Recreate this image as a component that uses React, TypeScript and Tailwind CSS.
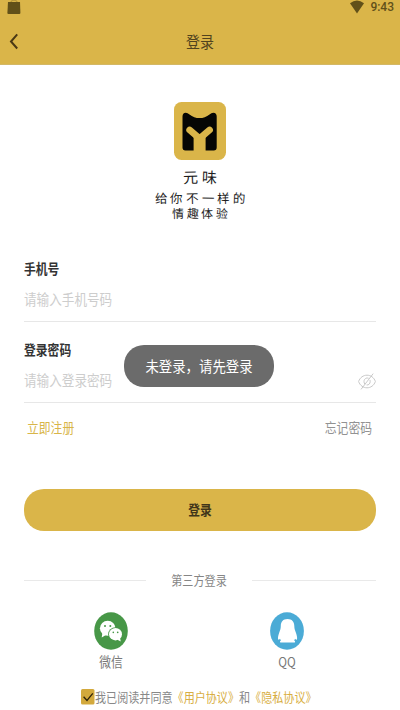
import type { ReactNode } from "react";

const Label = ({ className = "", children }: { className?: string; children: ReactNode }) => (
  <span className={`block whitespace-nowrap leading-5 -translate-y-px scale-y-[1.14] ${className}`}>
    {children}
  </span>
);

const StatusBar = () => (
  <div className="flex h-[15px] items-start justify-between pl-[7px] pr-[6px] text-[#615019]">
    <svg width="14" height="15" viewBox="0 0 14 15">
      <path d="M4 3V1.2Q7 -1 10 1.2V3" fill="none" stroke="currentColor" strokeWidth="1" opacity="0.35" />
      <path d="M1 2h12l.4 11q0 1-1 1H1.4q-1 0-1-1z" fill="currentColor" />
    </svg>
    <div className="flex items-start gap-[6px]">
      <svg width="14" height="14" viewBox="0 0 14 14" fill="currentColor">
        <path d="M0 3.2Q7 -2 14 3.2L7 13.5z" />
      </svg>
      <span className="block h-[14px] font-[Roboto] text-[12px] font-medium leading-[14px] scale-y-[1.1]">
        9:43
      </span>
    </div>
  </div>
);

const Header = () => (
  <header className="h-[65px] border-b border-[#d3b866] bg-[#dab549]">
    <StatusBar />
    <div className="grid h-[50px] grid-cols-[40px_1fr_40px] items-center pt-[3px]">
      <svg className="mb-[1px] ml-[9px]" width="10" height="17" viewBox="0 0 10 17" fill="none">
        <path d="M8.2 1.3L2 8.5l6.2 7" stroke="#4a3814" strokeWidth="2" />
      </svg>
      <Label className="text-center text-[14px] text-[#51431e]">登录</Label>
    </div>
  </header>
);

const Logo = () => (
  <svg width="52" height="58" viewBox="0 0 52 58">
    <rect width="52" height="58" rx="7.5" fill="#dab549" />
    <path
      d="M8.5 14.5q0-3.8 3.3-3.8 1.8 0 3.700 1.700Q20 16 25.500 16T35.500 12.400q1.900-1.700 3.700-1.700 3.500 0 3.500 3.800V45.500q0 3-3 3H11.500q-3 0-3-3z"
      fill="#060604"
    />
    <path
      d="M15.700 28L25.600 36.500 35.500 28"
      fill="none"
      stroke="#dab549"
      strokeWidth="6.800"
      strokeLinecap="round"
      strokeLinejoin="round"
    />
    <path d="M19.600 35h12v14h-12z" fill="#dab549" />
  </svg>
);

// alternate tilt gives the slogan its hand-written look
const Brush = ({ text, className }: { text: string; className: string }) => (
  <div className={`flex justify-center text-[#1d1d1d] ${className}`}>
    {text.split("").map((c, i) => (
      <span key={i} className={i % 2 ? "rotate-2" : "-rotate-2"}>
        {c}
      </span>
    ))}
  </div>
);

const EyeOff = () => (
  <svg width="18" height="17" viewBox="0 0 18 17" fill="none" stroke="#c9c9c9" strokeWidth="1">
    <path d="M.6 8.500C2 4.500 5.300 2.200 9 2.200s7 2.300 8.400 6.300C16 12.500 12.700 14.800 9 14.800S2 12.500.6 8.500z" />
    <path d="M10.600 5.300C8.300 4.300 6 6 6 8.500q0 1.600.9 2.700M8.600 12c2.100.3 3.600-1.500 3.600-3.500q0-.8-.3-1.500" />
    <path d="M15.200.6L3 16.400" />
  </svg>
);

const Field = ({ label, placeholder, icon }: { label: string; placeholder: string; icon?: ReactNode }) => (
  <div className="h-[81px] border-b border-[#e7e7e7] pt-[18px]">
    <Label className="text-[11.8px] font-bold text-[#333]">{label}</Label>
    <div className="mt-[11px] flex items-center justify-between">
      <Label className="text-[12.6px] text-[#cdcdcd]">{placeholder}</Label>
      {icon}
    </div>
  </div>
);

const Wechat = () => (
  <svg width="34" height="38" viewBox="0 0 34 38">
    <ellipse cx="17" cy="19" rx="16.8" ry="18.7" fill="#479747" />
    <g fill="#fff">
      <ellipse cx="13.7" cy="16.3" rx="7.8" ry="7.5" />
      <path d="M8.500 20.500l-.8 5 4.200-2.500z" />
    </g>
    <ellipse cx="21.5" cy="22.2" rx="7.3" ry="7" fill="#479747" />
    <g fill="#fff">
      <ellipse cx="21.5" cy="22.2" rx="6.5" ry="6.2" />
      <path d="M23 27.500l3.700 2-.7-4z" />
    </g>
    <g fill="#479747">
      <circle cx="11" cy="14" r="1" />
      <circle cx="16.3" cy="14" r="1" />
      <circle cx="19.3" cy="20.4" r=".8" />
      <circle cx="23.7" cy="20.4" r=".8" />
    </g>
  </svg>
);

const QQ = () => (
  <svg width="34" height="38" viewBox="0 0 34 38">
    <ellipse cx="17" cy="19" rx="16.9" ry="18.7" fill="#4babd6" />
    <path
      d="M17.500 7C13 7 10.800 9.800 10.800 14c0 3-.9 4.500-1.700 7-.8 2.300-1.400 4.800-1 6.300.3.900 1.200.3 1.900-.5l.9 1.700c-.9.400-1.300 1.600-.5 2h14.300c.8-.4.400-1.600-.5-2l.9-1.700c.7.800 1.600 1.400 1.900.5.400-1.500-.2-4-1-6.300-.8-2.500-1.700-4-1.700-7C24.300 9.800 22 7 17.500 7z"
      fill="#fff"
    />
  </svg>
);

const ThirdParty = ({ icon, name }: { icon: ReactNode; name: string }) => (
  <div className="flex w-[176px] flex-col items-center">
    {icon}
    <Label className="mt-[2px] text-[11.8px] text-[#777]">{name}</Label>
  </div>
);

const Agreement = () => (
  <div className="mt-[15px] flex h-5 items-center pl-[81px] text-[11.08px] text-[#888]">
    <svg width="14" height="16" viewBox="0 0 14 16">
      <rect width="13.5" height="15.5" rx="1.5" fill="#d3a93c" />
      <path d="M2.600 7.700L6 11.400l5.800-7" fill="none" stroke="#30240a" strokeWidth="1.3" />
    </svg>
    <Label>
      我已阅读并同意<span className="text-[#d8ae42]">《用户协议》</span>和
      <span className="text-[#d8ae42]">《隐私协议》</span>
    </Label>
  </div>
);

const Toast = () => (
  <div className="absolute left-[124px] top-[345px] flex h-[42px] w-[150px] items-center justify-center rounded-[20px] bg-[#6b6b6b]">
    <Label className="text-[13.4px] text-white">未登录，请先登录</Label>
  </div>
);

export default function App() {
  return (
    <div className="relative h-[710px] w-[400px] overflow-hidden bg-white font-['Noto_Sans_CJK_SC',sans-serif]">
      <Header />
      <div className="flex h-[176px] flex-col items-center pt-[37px]">
        <Logo />
        <Brush text="元味" className="mt-[7px] gap-[3px] text-[15px] leading-[19px]" />
        <Brush text="给你不一样的" className="mt-[4px] gap-[3px] text-[12.5px] leading-[15px]" />
        <Brush text="情趣体验" className="gap-[2.5px] text-[12px] leading-[16px]" />
      </div>
      <main className="px-6">
        <Field label="手机号" placeholder="请输入手机号码" />
        <Field label="登录密码" placeholder="请输入登录密码" icon={<EyeOff />} />
        <div className="mt-[15px] flex justify-between pl-[3px] pr-[4px] text-[11.8px]">
          <Label className="text-[#d8b548]">立即注册</Label>
          <Label className="text-[#929292]">忘记密码</Label>
        </div>
        <button className="mt-[51px] flex h-[42px] w-full items-center justify-center rounded-[20px] bg-[#dab549]">
          <Label className="text-[11.8px] font-bold text-[#40351a]">登录</Label>
        </button>
        <div className="mt-[39px] flex items-center justify-between">
          <div className="h-px w-[122px] bg-[#e9e9e9]" />
          <Label className="text-[11.1px] text-[#858585]">第三方登录</Label>
          <div className="h-px w-[124px] bg-[#e9e9e9]" />
        </div>
        <div className="-ml-[2px] mt-[22px] flex justify-center">
          <ThirdParty icon={<Wechat />} name="微信" />
          <ThirdParty icon={<QQ />} name="QQ" />
        </div>
      </main>
      <Agreement />
      <Toast />
    </div>
  );
}
